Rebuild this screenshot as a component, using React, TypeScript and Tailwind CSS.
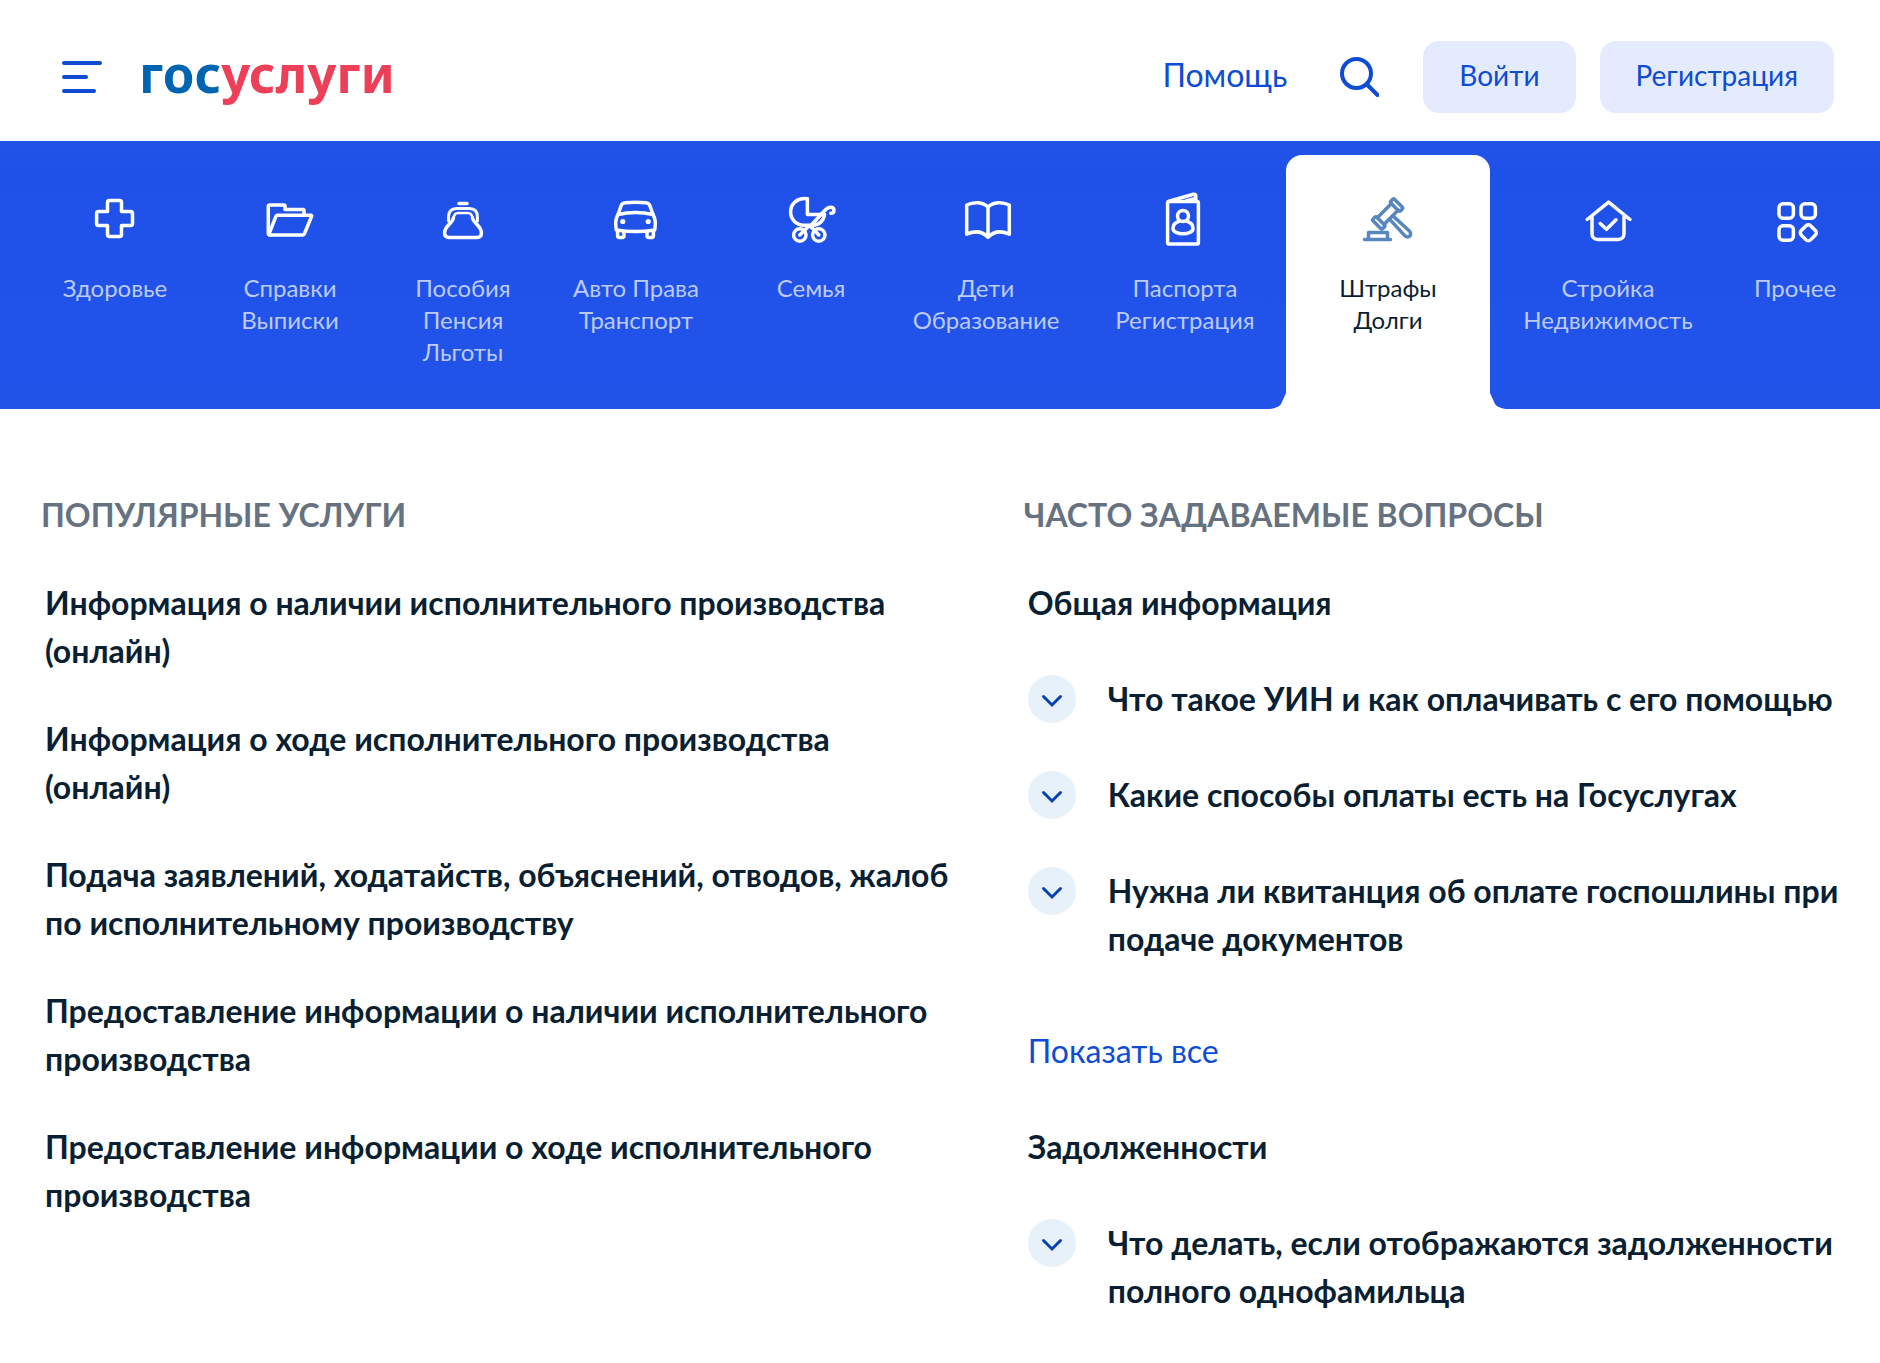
import { useState } from "react";
import type { ReactNode } from "react";
import clsx from "clsx";

type Category = {
  id: string;
  lines: string[];
  icon: ReactNode;
};

const categories: Category[] = [
  {
    id: "health",
    lines: ["Здоровье"],
    icon: (
      <path d="M22.500 9.600h10a2 2 0 0 1 2 2v8.900h9a2 2 0 0 1 2 2v10a2 2 0 0 1-2 2h-9v9a2 2 0 0 1-2 2h-10a2 2 0 0 1-2-2v-9h-8.900a2 2 0 0 1-2-2v-10a2 2 0 0 1 2-2h8.900v-8.900a2 2 0 0 1 2-2z" />
    ),
  },
  {
    id: "certificates",
    lines: ["Справки", "Выписки"],
    icon: (
      <>
        <path d="M42 24v-4.500a1 1 0 0 0-1-1H23V15a1 1 0 0 0-1-1H7.800a1.500 1.500 0 0 0-1.500 1.500V42a2 2 0 0 0 2 2" />
        <path d="M6.800 43.500L14 25.200a1.500 1.500 0 0 1 1.400-1h33.400a.8.8 0 0 1 .8 1.100L42.300 43a1.500 1.500 0 0 1-1.400 1H8" />
      </>
    ),
  },
  {
    id: "benefits",
    lines: ["Пособия", "Пенсия", "Льготы"],
    icon: (
      <>
        <path d="M24 12.400h8" />
        <path d="M13.600 30v-4c0-6 2.500-8.600 8-8.600h12.800c5.500 0 8 2.600 8 8.600v4" strokeWidth="3" />
        <path d="M18.500 27c.5-3.500 1.500-5 4.500-5h10c3 0 4 1.500 4.500 5" strokeWidth="2.600" />
        <path d="M18.500 27c-.5 3-2 4-4.500 6.500-2.700 2.700-4.400 5.500-4.400 8.500 0 3 1.500 4.400 4.400 4.400h28c2.900 0 4.400-1.400 4.400-4.400 0-3-1.700-5.800-4.400-8.500-2.500-2.500-4-3.500-4.500-6.500" />
      </>
    ),
  },
  {
    id: "transport",
    lines: ["Авто Права", "Транспорт"],
    icon: (
      <>
        <path d="M10 23.500l3-8.500c.8-2.200 2-3 4.200-3.200 7-.6 13.600-.6 20.600 0 2.200.2 3.400 1 4.200 3.200l3 8.500" />
        <path d="M10 23.500c12-2.600 23-2.600 35 0 2.500 4 2.700 10 1.700 15.500-13 2.200-25.400 2.200-38.400 0-1-5.500-.8-11.500 1.700-15.500z" />
        <path d="M9.600 39.500v5.200c0 1 .7 1.700 1.700 1.700h3c1 0 1.700-.7 1.700-1.700V40.500M39 40.500v4.200c0 1 .7 1.700 1.700 1.700h3c1 0 1.700-.7 1.700-1.700v-5.200" />
        <circle cx="14.800" cy="30.500" r="2.600" fill="currentColor" stroke="none" />
        <circle cx="40.200" cy="30.500" r="2.600" fill="currentColor" stroke="none" />
      </>
    ),
  },
  {
    id: "family",
    lines: ["Семья"],
    icon: (
      <>
        <path d="M24.400 8v15.500H41" />
        <path d="M24.400 7.800C14 6.300 7.600 13 7.600 20.800c0 7.500 5.500 13.400 13 13.400h9c6 0 11-4 12-10.700" />
        <path d="M27 35.500l14.500-15.800c2-2.200 3.200-3.400 6-3.400 2.300 0 3.500 1.500 3.500 3.200 0 2-1.300 3-3.200 2.700" />
        <circle cx="16.800" cy="44" r="6.200" />
        <circle cx="35.800" cy="44" r="6.200" />
        <path d="M16.800 44l9-9M35.800 44l-8.500-9" />
      </>
    ),
  },
  {
    id: "education",
    lines: ["Дети", "Образование"],
    icon: (
      <>
        <path d="M30 16c-5-5.200-14-5.600-21.300-2v29.200c8-3.600 15.800-2.800 21.300 3 5.500-5.800 13.300-6.600 21.300-3V14C44 10.400 35 10.800 30 16z" />
        <path d="M30 16v30" />
      </>
    ),
  },
  {
    id: "passports",
    lines: ["Паспорта", "Регистрация"],
    icon: (
      <>
        <rect x="10.600" y="10.600" width="30.800" height="42.400" rx="1.600" />
        <path d="M12 10.300l24.500-7c1.300-.4 2.300.3 2.300 1.500v5" />
        <path d="M29 9.500l9.500-2.500" strokeWidth="2.500" />
        <circle cx="26" cy="25" r="5.500" />
        <path d="M21.500 30.500c-3 1-5.500 3.600-5.500 7 0 3.400 5 5.300 10 5.300s10-1.900 10-5.300c0-3.400-2.500-6-5.500-7" />
      </>
    ),
  },
  {
    id: "fines",
    lines: ["Штрафы", "Долги"],
    icon: (
      <>
        <g transform="translate(27.700 23) rotate(-45)">
          <rect x="-15.200" y="-6.800" width="5.200" height="13.600" rx="1.500" />
          <rect x="10" y="-6.800" width="5.200" height="13.600" rx="1.500" />
          <path d="M-10-4.700h20M-10 4.700h20" />
          <path d="M-2.300 5l-1 22c-.2 5.500 6.800 5.500 6.600 0l-1-22" />
        </g>
        <path d="M4.500 48.500h26M8.500 48v-6.500h19V48" />
      </>
    ),
  },
  {
    id: "property",
    lines: ["Стройка", "Недвижимость"],
    icon: (
      <>
        <path d="M7.200 28.500l21.400-17.400 21.400 17.400" />
        <path d="M12 25.500V42.700c0 3.500 2.200 5.700 5.700 5.700h20.600c3.500 0 5.700-2.200 5.700-5.700V25.500" />
        <path d="M20.200 32.500l6.300 5.800 9.500-9.500" />
      </>
    ),
  },
  {
    id: "other",
    lines: ["Прочее"],
    icon: (
      <>
        <rect x="12" y="12.800" width="14.400" height="14.400" rx="4" />
        <rect x="34" y="12.800" width="14.400" height="14.400" rx="4" />
        <rect x="12" y="34.800" width="14.400" height="14.400" rx="4" />
        <rect x="34.700" y="35.200" width="13.200" height="13.200" rx="3.200" transform="rotate(45 41.300 41.800)" />
      </>
    ),
  },
];

const services = [
  "Информация о наличии исполнительного производства (онлайн)",
  "Информация о ходе исполнительного производства (онлайн)",
  "Подача заявлений, ходатайств, объяснений, отводов, жалоб по исполнительному производству",
  "Предоставление информации о наличии исполнительного производства",
  "Предоставление информации о ходе исполнительного производства",
];

const generalQuestions = [
  "Что такое УИН и как оплачивать с его помощью",
  "Какие способы оплаты есть на Госуслугах",
  "Нужна ли квитанция об оплате госпошлины при подаче документов",
];

const debtQuestions = [
  "Что делать, если отображаются задолженности полного однофамильца",
];

function Header() {
  return (
    <header className="flex h-[141px] items-center pt-3 pr-[46px] pl-[62px]">
      <button type="button" aria-label="Меню" className="flex flex-col gap-2.5">
        <span className="h-1 w-10 rounded-full bg-[#0d4cd3]" />
        <span className="h-1 w-[26px] rounded-full bg-[#0d4cd3]" />
        <span className="h-1 w-[34px] rounded-full bg-[#0d4cd3]" />
      </button>
      <a
        href="#"
        className="mb-2 ml-[37px] font-['Noto_Sans',sans-serif] text-[51px] leading-[60px] font-bold text-[#ee3f58]"
      >
        <span className="text-[#0065b1]">гос</span>услуги
      </a>
      <div className="ml-auto flex items-center">
        <a href="#" className="pb-1 text-[32px] leading-10 text-[#0d4cd3]">
          Помощь
        </a>
        <button type="button" aria-label="Поиск" className="ml-13 text-[#0d4cd3]">
          <svg
            className="size-10"
            viewBox="0 0 40 40"
            fill="none"
            stroke="currentColor"
            strokeWidth="4"
            strokeLinecap="round"
          >
            <circle cx="17.500" cy="16.500" r="14.500" />
            <path d="M28 27.500L38.500 38" />
          </svg>
        </button>
        <button
          type="button"
          className="ml-11 h-18 rounded-2xl bg-[#e4ebfe] px-9 pb-1 text-[28px] text-[#0d4cd3]"
        >
          Войти
        </button>
        <button
          type="button"
          className="ml-6 h-18 rounded-2xl bg-[#e4ebfe] px-9 pb-1 text-[28px] text-[#0d4cd3]"
        >
          Регистрация
        </button>
      </div>
    </header>
  );
}

function TabFoot({ className }: { className: string }) {
  return (
    <svg className={clsx("absolute bottom-0 size-4 text-white", className)} viewBox="0 0 16 16">
      <path d="M16 0L11 11Q9 14.500 0 16H16Z" fill="currentColor" />
    </svg>
  );
}

type CategoryNavProps = {
  active: string;
  onSelect: (id: string) => void;
};

function CategoryNav({ active, onSelect }: CategoryNavProps) {
  return (
    <nav className="grid grid-cols-[154fr_196fr_150fr_196fr_154fr_196fr_202fr_204fr_236fr_138fr] bg-linear-to-b from-[#2354e8] via-[#1f51e9] via-10% to-[#2253e9] pt-3.5 pr-4 pl-[38px]">
      {categories.map((category) => {
        const isActive = category.id === active;

        return (
          <button
            key={category.id}
            type="button"
            onClick={() => onSelect(category.id)}
            className={clsx(
              "relative flex min-h-[254px] flex-col items-center rounded-t-2xl pt-9",
              isActive ? "bg-white text-[#5886be]" : "text-white"
            )}
          >
            <svg
              className="size-14"
              viewBox="0 0 56 56"
              fill="none"
              stroke="currentColor"
              strokeWidth="3.500"
              strokeLinecap="round"
              strokeLinejoin="round"
            >
              {category.icon}
            </svg>
            <span
              className={clsx(
                "mt-[25px] text-2xl leading-8",
                isActive ? "text-[#0b1f33]" : "text-[#bccbf8]"
              )}
            >
              {category.lines.map((line) => (
                <span key={line} className="block whitespace-nowrap">
                  {line}
                </span>
              ))}
            </span>
            {isActive && (
              <>
                <TabFoot className="-left-4" />
                <TabFoot className="-right-4 -scale-x-100" />
              </>
            )}
          </button>
        );
      })}
    </nav>
  );
}

function Question({ text }: { text: string }) {
  const [open, setOpen] = useState(false);

  return (
    <button
      type="button"
      aria-expanded={open}
      onClick={() => setOpen(!open)}
      className="flex items-start gap-8 text-left"
    >
      <span className="flex size-12 shrink-0 items-center justify-center rounded-full bg-[#e6f1fa] text-[#0b40b3]">
        <svg
          className={clsx("size-6", open && "rotate-180")}
          viewBox="0 0 24 24"
          fill="none"
          stroke="currentColor"
          strokeWidth="3"
          strokeLinecap="round"
        >
          <path d="M3.500 9.500l8.500 8.500 8.500-8.500" />
        </svg>
      </span>
      <span className="font-bold">{text}</span>
    </button>
  );
}

export default function App() {
  const [active, setActive] = useState("fines");

  return (
    <div className="bg-white font-[Lato,sans-serif] text-[32px] leading-12 text-[#0b1f33]">
      <Header />
      <CategoryNav active={active} onSelect={setActive} />

      <main className="grid grid-cols-[9fr_8fr] gap-[60px] pt-[82px] pr-9 pb-8 pl-[41px]">
        <section className="pr-2">
          <h2 className="font-bold text-[#66727f] uppercase">Популярные услуги</h2>
          <ul className="mt-10 flex flex-col gap-10 pl-1">
            {services.map((service) => (
              <li key={service}>
                <a href="#" className="block font-bold">
                  {service}
                </a>
              </li>
            ))}
          </ul>
        </section>

        <section>
          <h2 className="font-bold text-[#66727f] uppercase">Часто задаваемые вопросы</h2>
          <div className="mt-10 pl-1">
            <h3 className="font-bold">Общая информация</h3>
            <div className="mt-12 flex flex-col gap-12">
              {generalQuestions.map((question) => (
                <Question key={question} text={question} />
              ))}
            </div>
            <a href="#" className="mt-16 inline-block text-[#0d4cd3]">
              Показать все
            </a>
            <h3 className="mt-12 font-bold">Задолженности</h3>
            <div className="mt-12 flex flex-col gap-12">
              {debtQuestions.map((question) => (
                <Question key={question} text={question} />
              ))}
            </div>
          </div>
        </section>
      </main>
    </div>
  );
}
